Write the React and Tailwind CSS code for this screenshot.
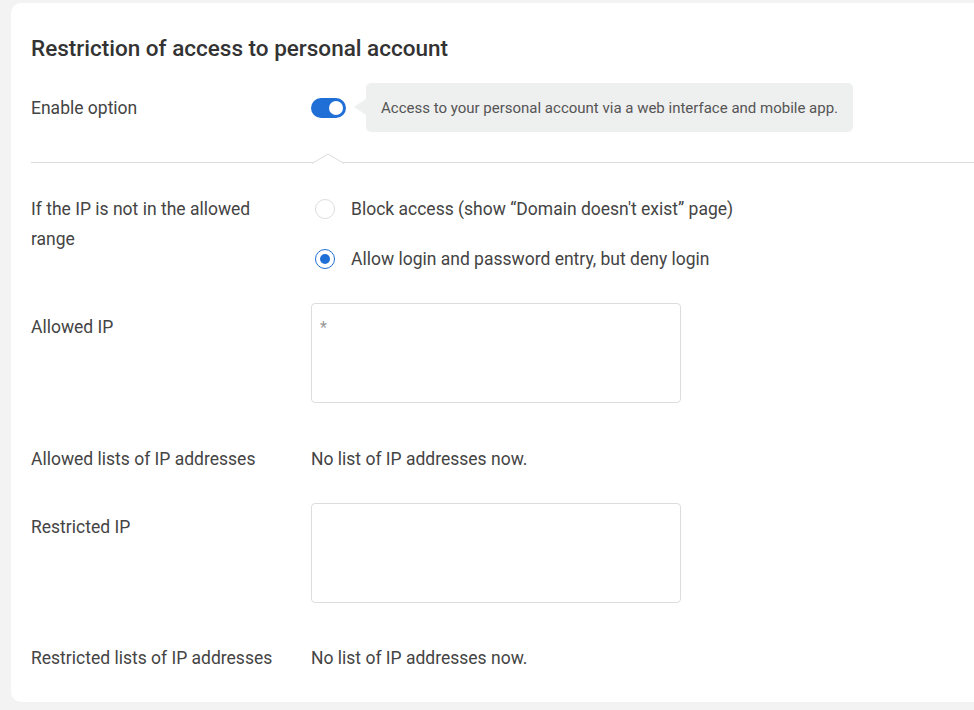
export default function App() {
  return (
    <div
      className="w-[974px] h-[710px] bg-[#f2f3f2] overflow-hidden pt-[3px] pl-[11px]"
      style={{ fontFamily: "Roboto, 'Noto Sans', sans-serif" }}
    >
      <div className="w-[990px] h-[699px] bg-white rounded-[10px] pl-5 pt-[31px] text-[#444] text-[17.5px] leading-[30px]">
        <h1 className="text-[22.5px] leading-[28px] font-medium text-[#333]">
          Restriction of access to personal account
        </h1>

        <div className="flex items-center mt-[21px]">
          <div className="w-[280px] shrink-0">Enable option</div>
          <button className="w-[35px] h-[20px] rounded-full bg-[#1f6fd6] flex items-center justify-end pr-[3px]">
            <span className="w-[14px] h-[14px] rounded-full bg-white" />
          </button>
          <div className="relative ml-[20px] bg-[#eeefef] rounded-[5px] h-[49px] flex items-center px-[15px] text-[15px] text-[#555]">
            <span className="absolute left-[-12px] top-[16px] w-0 h-0 border-y-[8px] border-y-transparent border-r-[12px] border-r-[#eeefef]" />
            Access to your personal account via a web interface and mobile app.
          </div>
        </div>

        <div className="relative mt-[30px] border-t border-[#dcdcdc]">
          <svg
            className="absolute left-[281px] top-[-10px]"
            width="32"
            height="11"
            viewBox="0 0 32 11"
          >
            <polyline points="0,10.5 16,1 32,10.5" fill="#fff" stroke="#dcdcdc" strokeWidth="1" />
          </svg>
        </div>

        <div className="flex mt-[31px]">
          <div className="w-[280px] shrink-0 pr-[30px]">If the IP is not in the allowed range</div>
          <div className="flex flex-col gap-[20px]">
            <label className="flex items-center h-[30px]">
              <span className="w-[20px] h-[20px] rounded-full border border-[#dddddd] ml-[4px] mr-[16px]" />
              Block access (show “Domain doesn't exist” page)
            </label>
            <label className="flex items-center h-[30px]">
              <span className="w-[20px] h-[20px] rounded-full border border-[#1f6fd6] ml-[4px] mr-[16px] flex items-center justify-center">
                <span className="w-[10px] h-[10px] rounded-full bg-[#1f6fd6]" />
              </span>
              Allow login and password entry, but deny login
            </label>
          </div>
        </div>

        <div className="flex mt-[29px]">
          <div className="w-[280px] shrink-0 pt-[9px]">Allowed IP</div>
          <textarea
            className="w-[370px] h-[100px] border border-[#dddddd] rounded-[4px] px-[8px] pt-[12px] text-[16px] leading-[24px] resize-none outline-none placeholder:text-[#999]"
            placeholder="*"
          />
        </div>

        <div className="flex mt-[41px]">
          <div className="w-[280px] shrink-0">Allowed lists of IP addresses</div>
          <div>No list of IP addresses now.</div>
        </div>

        <div className="flex mt-[29px]">
          <div className="w-[280px] shrink-0 pt-[9px]">Restricted IP</div>
          <textarea className="w-[370px] h-[100px] border border-[#dddddd] rounded-[4px] px-[8px] pt-[12px] text-[16px] leading-[24px] resize-none outline-none" />
        </div>

        <div className="flex mt-[40px]">
          <div className="w-[280px] shrink-0">Restricted lists of IP addresses</div>
          <div>No list of IP addresses now.</div>
        </div>
      </div>
    </div>
  );
}
